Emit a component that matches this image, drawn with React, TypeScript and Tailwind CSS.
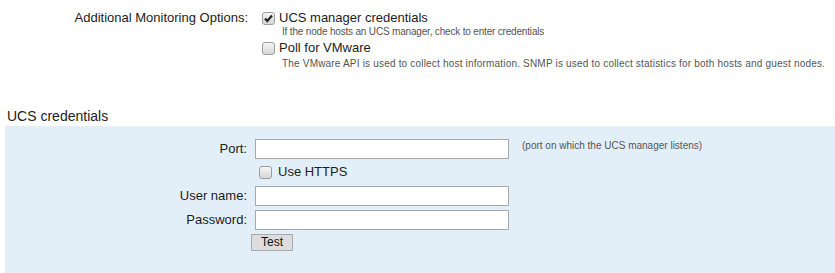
import React from "react";

function Box({ checked }: { checked?: boolean }) {
  return (
    <span className="relative inline-block w-[13px] h-[13px] shrink-0 rounded-[3px] border border-[#9e9e9e] bg-gradient-to-b from-[#f6f6f6] to-[#d6d6d6]">
      {checked && (
        <svg viewBox="0 0 13 13" className="absolute left-[-1px] top-[-1px] w-[13px] h-[13px]">
          <path d="M3 6.5 L5.3 9 L10 3.5" fill="none" stroke="#262626" strokeWidth="2.2" />
        </svg>
      )}
    </span>
  );
}

export default function App() {
  return (
    <div className="w-[835px] h-[273px] overflow-hidden bg-white text-[13px] text-[#1c1c1c] font-['Liberation_Sans',Arial,sans-serif]">
      <div className="flex pt-[9px]">
        <div className="w-[248px] text-right leading-[16px] pt-[1px]">Additional Monitoring Options:</div>
        <div className="ml-[14px] flex flex-col">
          <div className="flex items-center gap-[4px] h-[16px] mt-[1px]">
            <Box checked />
            <span className="leading-[16px]">UCS manager credentials</span>
          </div>
          <div className="ml-[20px] text-[10px] leading-[12px] text-[#555] tracking-[-0.18px]">
            If the node hosts an UCS manager, check to enter credentials
          </div>
          <div className="flex items-center gap-[4px] h-[16px] mt-[2px]">
            <Box />
            <span className="leading-[16px]">Poll for VMware</span>
          </div>
          <div className="ml-[20px] text-[10px] leading-[12px] text-[#555] mt-[2px] tracking-[0.19px]">
            The VMware API is used to collect host information. SNMP is used to collect statistics for both hosts and guest nodes.
          </div>
        </div>
      </div>
      <div className="ml-[7px] mt-[38px] text-[14px] leading-[16px] text-[#222]">UCS credentials</div>
      <div className="ml-[5px] mt-[2px] h-[160px] bg-[#e3eff8] pt-[13px]">
        <div className="flex items-center h-[20px]">
          <div className="w-[242px] text-right">Port:</div>
          <input className="ml-[8px] w-[254px] h-[20px] border border-[#a9a9a9] bg-white outline-none" />
          <div className="ml-[13px] self-start mt-[1px] text-[10px] leading-[12px] text-[#555]">(port on which the UCS manager listens)</div>
        </div>
        <div className="flex items-center h-[20px] mt-[3px] pl-[254px] gap-[6px]">
          <Box />
          <span>Use HTTPS</span>
        </div>
        <div className="flex items-center h-[20px] mt-[4px]">
          <div className="w-[242px] text-right">User name:</div>
          <input className="ml-[8px] w-[254px] h-[20px] border border-[#a9a9a9] bg-white outline-none" />
        </div>
        <div className="flex items-center h-[20px] mt-[4px]">
          <div className="w-[242px] text-right">Password:</div>
          <input type="password" className="ml-[8px] w-[254px] h-[20px] border border-[#a9a9a9] bg-white outline-none" />
        </div>
        <div className="pl-[246px] mt-[2px]">
          <button className="w-[42px] h-[17px] bg-[#dddddd] border border-[#aaaaaa] text-[12px] leading-[15px] text-[#111] p-0">Test</button>
        </div>
      </div>
    </div>
  );
}
